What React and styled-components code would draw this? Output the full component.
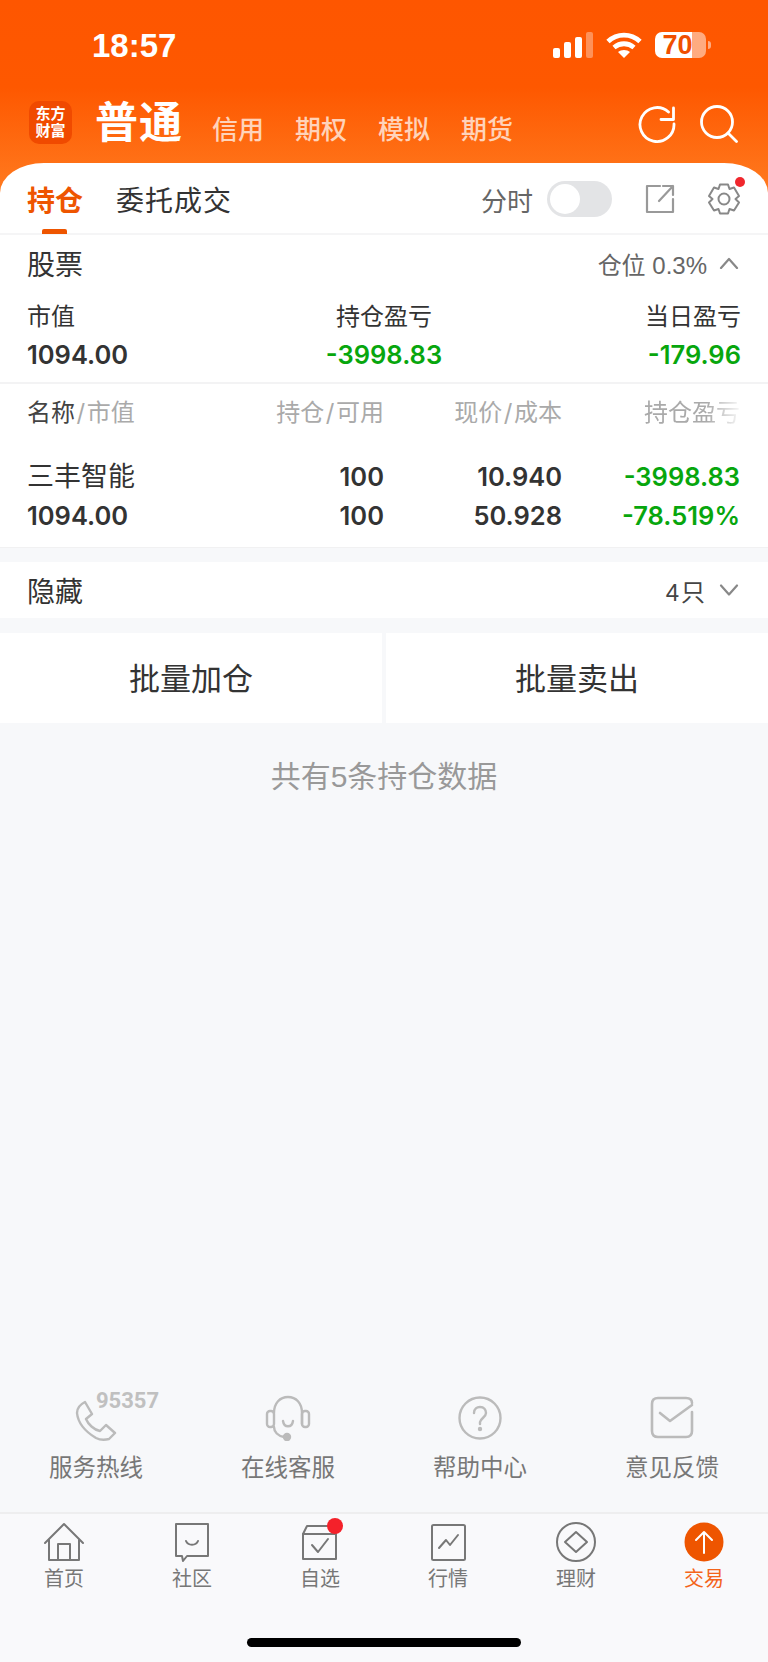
import React from "react";
import styled, { createGlobalStyle } from "styled-components";

const GlobalStyle = createGlobalStyle`
  html, body { margin: 0; padding: 0; background: #f7f8fa; }
  * { box-sizing: border-box; }
  body { font-family: Inter, "Noto Sans CJK SC", sans-serif; }
`;

const GREEN = "#07a60d";
const ORANGE = "#ee5500";

const Page = styled.div`
  width: 768px;
  height: 1662px;
  overflow: hidden;
  display: flex;
  flex-direction: column;
  background: #f7f8fa;
`;

// orange top part
const Header = styled.header`
  height: 195px;
  flex: none;
  background: linear-gradient(180deg, #fe5600 0%, #fe5800 45%, #ff7b20 100%);
`;
const StatusBar = styled.div`
  height: 90px;
  display: flex;
  align-items: center;
  padding: 0 62px 0 92px;
  color: #fff;
`;
const Clock = styled.div`
  font-family: "Liberation Sans", sans-serif;
  font-size: 33px;
  font-weight: 700;
  flex: 1;
  line-height: 1;
`;
const StatusIcons = styled.div`
  display: flex;
  align-items: center;
  gap: 13px;
`;
const Battery = styled.div`
  position: relative;
  width: 51px;
  height: 26px;
  border-radius: 7px;
  background: linear-gradient(90deg, #fff 0 37px, rgba(255, 255, 255, 0.5) 37px);
  color: #f04f00;
  font-family: "Liberation Sans", sans-serif;
  font-weight: 700;
  font-size: 27px;
  line-height: 26px;
  text-align: center;
  padding-right: 6px;
  &::after {
    content: "";
    position: absolute;
    right: -5px;
    top: 9px;
    width: 3px;
    height: 8px;
    border-radius: 0 3px 3px 0;
    background: rgba(255, 255, 255, 0.5);
  }
`;
const NavRow = styled.div`
  display: flex;
  align-items: flex-end;
  padding: 0 30px 0 29px;
  height: 53px;
  margin-top: 5px;
`;
const Logo = styled.div`
  width: 43px;
  height: 43px;
  border-radius: 10px;
  background: #f04a00;
  color: #fff;
  font-size: 15px;
  font-weight: 700;
  line-height: 17px;
  text-align: center;
  padding-top: 4px;
  margin-bottom: 4px;
`;
const MainTitle = styled.div`
  color: #fff;
  font-size: 43px;
  font-weight: 700;
  line-height: 50px;
  margin: 0 -2px 1px 23px;
  letter-spacing: 1px;
`;
const NavLink = styled.div`
  color: rgba(255, 255, 255, 0.72);
  font-size: 26px;
  font-weight: 500;
  line-height: 36px;
  margin-left: 31px;
`;
const NavTools = styled.div`
  margin-left: auto;
  display: flex;
  gap: 24px;
  align-items: center;
  margin-bottom: 5px;
`;

// white sheet with the tabs
const Sheet = styled.div`
  background: #fff;
  margin-top: -32px;
  border-radius: 44px 44px 0 0 / 30px 30px 0 0;
  flex: none;
`;
const TabRow = styled.div`
  height: 72px;
  display: flex;
  align-items: center;
  padding: 0 27px;
  border-bottom: 2px solid #f5f5f6;
`;
const Tab = styled.div`
  position: relative;
  height: 72px;
  line-height: 78px;
  font-size: 28px;
  letter-spacing: ${(p) => (p.$active ? 0 : "1px")};
  font-weight: ${(p) => (p.$active ? 700 : 400)};
  color: ${(p) => (p.$active ? ORANGE : "#333")};
  margin-right: 33px;
  &::after {
    content: "";
    display: ${(p) => (p.$active ? "block" : "none")};
    position: absolute;
    left: 15px;
    bottom: 0;
    width: 25px;
    height: 5px;
    border-radius: 2px 2px 0 0;
    background: ${ORANGE};
  }
`;
const TabTools = styled.div`
  margin-left: auto;
  display: flex;
  align-items: center;
  margin-top: 2px;
`;
const ToolLabel = styled.span`
  font-size: 26px;
  color: #666;
`;
const Toggle = styled.div`
  width: 65px;
  height: 36px;
  border-radius: 18px;
  background: #e3e4e6;
  margin: 0 33px 0 14px;
  padding: 3px;
  &::before {
    content: "";
    display: block;
    width: 30px;
    height: 30px;
    border-radius: 50%;
    background: #fff;
  }
`;
const GearWrap = styled.div`
  position: relative;
  display: flex;
  margin-left: 32px;
  &::after {
    content: "";
    position: absolute;
    top: -5px;
    right: -4px;
    width: 10px;
    height: 10px;
    border-radius: 50%;
    background: #f0272d;
  }
`;

const SectionHead = styled.div`
  height: 56px;
  display: flex;
  align-items: center;
  justify-content: space-between;
  padding: 0 29px 0 27px;
  background: #fff;
`;
const SectionTitle = styled.div`
  font-size: 28px;
  color: #333;
`;
const SectionInfo = styled.div`
  display: flex;
  align-items: center;
  gap: 12px;
  font-size: 24px;
  letter-spacing: ${(p) => p.$spacing || 0}px;
  color: ${(p) => p.$color || "#666"};
  font-family: "Liberation Sans", "Noto Sans CJK SC", sans-serif;
`;

const Summary = styled.div`
  display: grid;
  grid-template-columns: 1fr 1fr 1fr;
  padding: 7px 27px 8px 27px;
  border-bottom: 2px solid #f3f3f4;
`;
const SummaryCol = styled.div`
  text-align: ${(p) => p.$align};
`;
const SummaryLabel = styled.div`
  font-size: 24px;
  line-height: 38px;
  color: #333;
`;
const Amount = styled.div`
  font-size: 25.5px;
  font-weight: 600;
  line-height: ${(p) => p.$lh || 38}px;
  color: ${(p) => p.$color || "#333"};
  white-space: nowrap;
`;

const TableGrid = styled.div`
  display: grid;
  grid-template-columns: 1fr 178px 178px 178px;
  padding: 0 28px 0 27px;
`;
const TableHead = styled(TableGrid)`
  height: 53px;
  align-items: center;
  font-size: 24px;
  color: #aaa;
`;
const HeadCell = styled.div`
  text-align: ${(p) => (p.$left ? "left" : "right")};
  white-space: nowrap;
`;
const FadedCell = styled(HeadCell)`
  -webkit-mask-image: linear-gradient(90deg, #000 65%, rgba(0, 0, 0, 0.1) 100%);
  mask-image: linear-gradient(90deg, #000 65%, rgba(0, 0, 0, 0.1) 100%);
  justify-self: end;
`;
const Strong = styled.span`
  color: #444;
`;
const Slash = styled.span`
  margin: 0 1.5px;
`;
const TableBody = styled(TableGrid)`
  padding-top: 20px;
  padding-bottom: 12px;
  border-bottom: 1px solid #f1f1f2;
  background: #fff;
`;
const Cell = styled.div`
  text-align: ${(p) => (p.$left ? "left" : "right")};
`;
const StockName = styled.div`
  font-size: 27px;
  line-height: 39px;
  color: #333;
`;

const HiddenWrap = styled.div`
  margin-top: 14px;
  flex: none;
`;
const Actions = styled.div`
  margin-top: 15px;
  height: 90px;
  flex: none;
  display: grid;
  grid-template-columns: 382px 382px;
  justify-content: space-between;
`;
const ActionButton = styled.div`
  background: #fff;
  display: flex;
  align-items: center;
  justify-content: center;
  font-size: 31px;
  color: #333;
  padding-bottom: 3px;
`;
const Notice = styled.div`
  margin-top: 32px;
  text-align: center;
  font-size: 30px;
  line-height: 44px;
  color: #999;
  font-family: "Liberation Sans", "Noto Sans CJK SC", sans-serif;
`;
const Spacer = styled.div`
  flex: 1;
`;

// service links above the tab bar
const Services = styled.div`
  display: grid;
  grid-template-columns: repeat(4, 192px);
  padding-bottom: 28px;
  flex: none;
`;
const Service = styled.div`
  display: flex;
  flex-direction: column;
  align-items: center;
  gap: 8px;
`;
const ServiceIcon = styled.div`
  position: relative;
  height: 52px;
  width: 52px;
  display: flex;
  align-items: center;
  justify-content: center;
`;
const HotlineNumber = styled.span`
  position: absolute;
  left: 26px;
  top: -2px;
  font-family: Roboto, sans-serif;
  font-size: 22px;
  font-weight: 700;
  line-height: 22px;
  color: #c0c0c0;
`;
const ServiceLabel = styled.div`
  font-size: 23.5px;
  line-height: 32px;
  color: #777;
`;

const TabBar = styled.nav`
  flex: none;
  height: 150px;
  border-top: 2px solid #eeeeef;
  background: #f9f9fb;
  padding-top: 8px;
`;
const BarItems = styled.div`
  display: grid;
  grid-template-columns: repeat(6, 128px);
`;
const BarItem = styled.div`
  display: flex;
  flex-direction: column;
  align-items: center;
  gap: 4px;
  position: relative;
`;
const BarDot = styled.span`
  position: absolute;
  left: 71px;
  top: -4px;
  width: 16px;
  height: 16px;
  border-radius: 50%;
  background: #f4212a;
`;
const BarLabel = styled.div`
  font-size: 20px;
  line-height: 26px;
  color: ${(p) => (p.$active ? "#f4641a" : "#777")};
`;
const HomeIndicator = styled.div`
  width: 274px;
  height: 9px;
  margin: 46px auto 0;
  border-radius: 5px;
  background: #000;
`;

const Stroke = ({ size = 40, w, h, color = "#777", width = 2, children }) => (
  <svg
    width={w || size}
    height={h || size}
    viewBox={`0 0 ${w || size} ${h || size}`}
    fill="none"
    stroke={color}
    strokeWidth={width}
    strokeLinecap="round"
    strokeLinejoin="round"
  >
    {children}
  </svg>
);

const navTabs = ["信用", "期权", "模拟", "期货"];

const services = [
  {
    label: "服务热线",
    icon: (
      <Stroke size={46} color="#bbb" width={2.4}>
        <path d="M12 7 L19 19 L13 24 C15 29 21 35 27 36 L33 30 L42 38 L36 44 C32 45 27 45 23 43 C13 37 5 28 4 18 C4 13 8 9 12 7 Z" />
      </Stroke>
    ),
    badge: "95357",
  },
  {
    label: "在线客服",
    icon: (
      <Stroke size={46} color="#bbb" width={2.4}>
        <path d="M9 18 C9 8 15 2 23 2 C31 2 37 8 37 18 V29" />
        <rect x="2" y="16" width="7" height="16" rx="3" />
        <rect x="37" y="16" width="7" height="16" rx="3" />
        <path d="M18 26 C19 33 27 33 28 26" />
        <path d="M9 32 C9 37 13 41 19 42" />
        <circle cx="22" cy="42" r="3" fill="#bbb" />
      </Stroke>
    ),
  },
  {
    label: "帮助中心",
    icon: (
      <Stroke size={46} color="#bbb" width={2.4}>
        <circle cx="23" cy="23" r="20.5" />
        <path d="M17 18 C17 14 20 12 23 12 C27 12 29 15 29 18 C29 22 24 23 23 27 V29" />
        <circle cx="23" cy="34" r="1" fill="#bbb" />
      </Stroke>
    ),
  },
  {
    label: "意见反馈",
    icon: (
      <Stroke size={44} color="#bbb" width={2.6}>
        <path d="M42 16 V35 Q42 41 36 41 H8 Q2 41 2 35 V8 Q2 2 8 2 H36 Q42 2 42 7" />
        <path d="M10 17 L20 25 L42 9" />
      </Stroke>
    ),
  },
];

const barItems = [
  {
    label: "首页",
    icon: (
      <Stroke color="#777">
        <path d="M1 21 L20 2 L39 21" />
        <path d="M5 18 V38 H35 V18" />
        <path d="M14 38 V22 H26 V38" />
      </Stroke>
    ),
  },
  {
    label: "社区",
    icon: (
      <Stroke color="#777">
        <path d="M4 2 H36 V34 H15 L11 39 L10 34 H4 Z" />
        <path d="M14 19 C16 24 24 24 26 19" />
      </Stroke>
    ),
  },
  {
    label: "自选",
    dot: true,
    icon: (
      <Stroke color="#777">
        <path d="M3 12 L7 4 H36 V37 H3 Z" />
        <path d="M3 12 H36" />
        <path d="M12 23 L18 30 L28 17" />
      </Stroke>
    ),
  },
  {
    label: "行情",
    icon: (
      <Stroke color="#777">
        <rect x="4" y="3" width="33" height="35" rx="1.5" />
        <path d="M11 26 L18 18 L22 23 L30 13" />
      </Stroke>
    ),
  },
  {
    label: "理财",
    icon: (
      <Stroke color="#777">
        <circle cx="20" cy="20" r="19" />
        <path d="M20 10 L31 20 L20 30 L9 20 Z" />
      </Stroke>
    ),
  },
  {
    label: "交易",
    active: true,
    icon: (
      <svg width="40" height="40" viewBox="0 0 40 40" fill="none" stroke="#fff" strokeWidth="2" strokeLinecap="round" strokeLinejoin="round">
        <circle cx="20" cy="20" r="19.5" fill={ORANGE} stroke="none" />
        <path d="M20 31 V10 M12 18 L20 10 L28 18" />
      </svg>
    ),
  },
];

export default function App() {
  return (
    <Page>
      <GlobalStyle />
      <Header>
        <StatusBar>
          <Clock>18:57</Clock>
          <StatusIcons>
            <svg width="40" height="26" viewBox="0 0 40 26" fill="#fff">
              <rect x="0" y="16" width="7" height="10" rx="2" />
              <rect x="11" y="10" width="7" height="16" rx="2" />
              <rect x="22" y="5" width="7" height="21" rx="2" />
              <rect x="33" y="0" width="7" height="26" rx="2" fillOpacity="0.35" />
            </svg>
            <svg width="36" height="26" viewBox="0 0 36 26" fill="none" stroke="#fff" strokeWidth="4.8">
              <path d="M2 9.5 C11 1 25 1 34 9.5" />
              <path d="M8 15.5 C14 10.5 22 10.5 28 15.5" />
              <path d="M18 26 L12 20 C15 17.2 21 17.2 24 20 Z" fill="#fff" stroke="none" />
            </svg>
            <Battery>70</Battery>
          </StatusIcons>
        </StatusBar>
        <NavRow>
          <Logo>东方<br />财富</Logo>
          <MainTitle>普通</MainTitle>
          {navTabs.map((t) => (
            <NavLink key={t}>{t}</NavLink>
          ))}
          <NavTools>
            <Stroke size={38} color="#fff" width={2.8}>
              <path d="M30.5 7 A17 17 0 1 0 36 19" />
              <path d="M35.5 3 V14.5 H23" />
            </Stroke>
            <Stroke size={38} color="#fff" width={2.8}>
              <circle cx="17" cy="17" r="15.5" />
              <path d="M28 28 L36.5 36.5" />
            </Stroke>
          </NavTools>
        </NavRow>
      </Header>

      <Sheet>
        <TabRow>
          <Tab $active>持仓</Tab>
          <Tab>委托成交</Tab>
          <TabTools>
            <ToolLabel>分时</ToolLabel>
            <Toggle />
            <Stroke size={30} color="#999" width={2.2}>
              <path d="M15 2 H2 V28 H28 V15" />
              <path d="M14 17 L28 2 M18 2 H28 V11" />
            </Stroke>
            <GearWrap>
              <Stroke size={34} color="#888" width={2}>
                <path d="M13 2.5 H21 L22.5 7 L27 5.5 L32 14 L28.5 17 L32 20.5 L27 28.5 L22.5 27 L21 31.5 H13 L11.5 27 L7 28.5 L2 20.5 L5.5 17 L2 14 L7 5.5 L11.5 7 Z" />
                <circle cx="17" cy="17" r="5.5" />
              </Stroke>
            </GearWrap>
          </TabTools>
        </TabRow>

        <SectionHead>
          <SectionTitle>股票</SectionTitle>
          <SectionInfo>
            仓位 0.3%
            <Stroke w={20} h={12} color="#888" width={2.2}>
              <path d="M2 11 L10 2 L18 11" />
            </Stroke>
          </SectionInfo>
        </SectionHead>

        <Summary>
          <SummaryCol $align="left">
            <SummaryLabel>市值</SummaryLabel>
            <Amount>1094.00</Amount>
          </SummaryCol>
          <SummaryCol $align="center">
            <SummaryLabel>持仓盈亏</SummaryLabel>
            <Amount $color={GREEN}>-3998.83</Amount>
          </SummaryCol>
          <SummaryCol $align="right">
            <SummaryLabel>当日盈亏</SummaryLabel>
            <Amount $color={GREEN}>-179.96</Amount>
          </SummaryCol>
        </Summary>

        <TableHead>
          <HeadCell $left><Strong>名称</Strong><Slash>/</Slash>市值</HeadCell>
          <HeadCell>持仓<Slash>/</Slash>可用</HeadCell>
          <HeadCell>现价<Slash>/</Slash>成本</HeadCell>
          <FadedCell>持仓盈亏</FadedCell>
        </TableHead>
        <TableBody>
          <Cell $left>
            <StockName>三丰智能</StockName>
            <Amount $lh={39}>1094.00</Amount>
          </Cell>
          <Cell>
            <Amount $lh={39}>100</Amount>
            <Amount $lh={39}>100</Amount>
          </Cell>
          <Cell>
            <Amount $lh={39}>10.940</Amount>
            <Amount $lh={39}>50.928</Amount>
          </Cell>
          <Cell>
            <Amount $lh={39} $color={GREEN}>-3998.83</Amount>
            <Amount $lh={39} $color={GREEN}>-78.519%</Amount>
          </Cell>
        </TableBody>
      </Sheet>

      <HiddenWrap>
        <SectionHead>
          <SectionTitle>隐藏</SectionTitle>
          <SectionInfo $color="#444" $spacing={2}>
            4只
            <Stroke w={20} h={12} color="#888" width={2.2}>
              <path d="M2 1.5 L10 10.5 L18 1.5" />
            </Stroke>
          </SectionInfo>
        </SectionHead>
      </HiddenWrap>

      <Actions>
        <ActionButton>批量加仓</ActionButton>
        <ActionButton>批量卖出</ActionButton>
      </Actions>

      <Notice>共有5条持仓数据</Notice>
      <Spacer />

      <Services>
        {services.map((s) => (
          <Service key={s.label}>
            <ServiceIcon>
              {s.icon}
              {s.badge && <HotlineNumber>{s.badge}</HotlineNumber>}
            </ServiceIcon>
            <ServiceLabel>{s.label}</ServiceLabel>
          </Service>
        ))}
      </Services>

      <TabBar>
        <BarItems>
          {barItems.map((b) => (
            <BarItem key={b.label}>
              {b.icon}
              {b.dot && <BarDot />}
              <BarLabel $active={b.active}>{b.label}</BarLabel>
            </BarItem>
          ))}
        </BarItems>
        <HomeIndicator />
      </TabBar>
    </Page>
  );
}
